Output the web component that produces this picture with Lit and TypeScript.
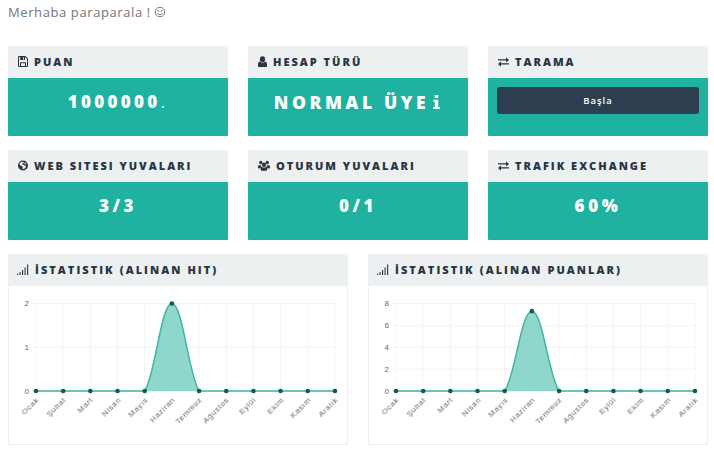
import { LitElement, html, css, svg } from "lit";
import { customElement, property } from "lit/decorators.js";

const MONTHS = ["Ocak","Şubat","Mart","Nisan","Mayıs","Haziran","Temmuz","Ağustos","Eylül","Ekim","Kasım","Aralık"];

const icons: Record<string, { w: number; body: unknown }> = {
  save: { w: 10, body: svg`<path fill-rule="evenodd" d="M0 1.2A1.2 1.2 0 0 1 1.2 0h6.3L10 2.5v7.3A1.2 1.2 0 0 1 8.8 11H1.2A1.2 1.2 0 0 1 0 9.8ZM1 1v9h1V6.2h6V10h1V3L7.2 1H7v3H2.2V1Zm2 6.2V10h4V7.2ZM5 1.4v2h1v-2Z"/>` },
  user: { w: 9, body: svg`<g transform="scale(.9 1)"><path d="M5 0.3a2.9 2.9 0 1 1 0 5.8a2.9 2.9 0 0 1 0-5.8ZM2 5.6c.8.7 1.8 1.1 3 1.1s2.200-.4 3-1.100c1.300.2 2 1.400 2 3.200v.9c0 .7-.5 1.300-1.200 1.300H1.200C.5 11 0 10.400 0 9.700v-.9c0-1.800.7-3 2-3.200Z"/></g>` },
  exchange: { w: 11, body: svg`<path d="M0 3h8V1l3 2.700-3 2.600V4.300H0ZM11 7H3V5.200L0 7.800l3 2.700V8.300h8Z" transform="translate(0 .2)"/>` },
  globe: { w: 10, body: svg`<path fill-rule="evenodd" d="M5 .5a5 5 0 1 1 0 10a5 5 0 0 1 0-10ZM3 2 1.400 3.400l.6 1.800 2 .7.800 1.600-.4 1.500h1.200L7.400 8l.6-2-2-.9-1.200-.4L4 3.800l1.400-.6.400-1.500Zm4 .2-.6 1.200 1 .9h1.200A4 4 0 0 0 7 2.200Z"/>` },
  users: { w: 12, body: svg`<g transform="scale(.92 1)"><path d="M3 .8a1.800 1.800 0 1 1 0 3.600a1.800 1.800 0 0 1 0-3.600ZM10 .8a1.800 1.800 0 1 1 0 3.600a1.800 1.800 0 0 1 0-3.600ZM6.500 2.500a2.200 2.200 0 1 1 0 4.400a2.200 2.200 0 0 1 0-4.400ZM0 7c0-1.200.5-2 1.300-2.100.5.400 1 .6 1.700.6h.4a3 3 0 0 0 .8 1.700C3 7.400 2.600 8 2.500 8.600H1C.4 8.600 0 8.200 0 7.600ZM13 7c0-1.200-.5-2-1.300-2.100-.5.400-1 .6-1.700.6h-.4a3 3 0 0 1-.8 1.700c1.200.2 1.600.8 1.700 1.400H12c.6 0 1-.4 1-1ZM4.500 7c.5.400 1.200.6 2 .6s1.500-.2 2-.6c1.100.2 1.500 1.200 1.500 2.400 0 .9-.5 1.400-1.200 1.400H4.200C3.500 10.800 3 10.300 3 9.400 3 8.200 3.400 7.200 4.500 7Z"/></g>` },
  signal: { w: 12, body: svg`<path d="M0 9.500h1.200V11H0ZM2.500 8h1.200v3H2.500ZM5 6h1.200v5H5ZM7.500 3.500h1.200V11H7.500ZM10 .5h1.200V11H10Z"/>` },
};

@customElement("stat-card")
class StatCard extends LitElement {
  @property() icon = "";
  @property() label = "";
  static styles = css`
    :host { display: flex; flex-direction: column; height: 90px; }
    .head { height: 32px; display: flex; align-items: center; gap: 6px; padding: 0 0 2px 10px; box-sizing: border-box;
      background: #ecf0f1; border-radius: 3px 3px 0 0; color: #2a3542; font-size: 11px; font-weight: 800; letter-spacing: 2px; }
    .head svg { fill: #2a3542; flex: none; }
    .body { flex: 1; background: #20b2a0; border-radius: 0 0 1px 1px; color: #fff; }
  `;
  render() {
    const i = icons[this.icon];
    return html`<div class="head"><svg width=${i.w} height="11" viewBox="0 0 ${i.w} 11">${i.body}</svg><span>${this.label}</span></div>
      <div class="body"><slot></slot></div>`;
  }
}

@customElement("chart-card")
class ChartCard extends LitElement {
  @property() label = "";
  @property({ type: Number }) max = 2;
  @property({ type: Number }) step = 1;
  @property({ type: Number }) peak = 2;
  static styles = css`
    :host { display: block; height: 191px; box-sizing: border-box; }
    .head { height: 32px; display: flex; align-items: center; gap: 6px; padding: 0 0 2px 9px; box-sizing: border-box;
      background: #ecf0f1; border-radius: 3px 3px 0 0; color: #2a3542; font-size: 11px; font-weight: 800; letter-spacing: 2.050px; }
    .head svg.ic { fill: #3a4653; flex: none; }
    .body { position: relative; height: 159px; box-sizing: border-box; border: 1px solid #eceef0; border-top: 0; border-radius: 0 0 3px 3px; background: #fff; }
    svg.chart { display: block; width: 100%; height: 100%; overflow: visible; }
    .tick { font: 8px "Liberation Sans", sans-serif; fill: #666; }
    .month { position: absolute; top: 113px; white-space: nowrap; font: 8px/8px "Liberation Sans", sans-serif; color: #6c6c6c; letter-spacing: 0.6px;
      transform-origin: 100% 50%; transform: translate(-100%, -50%) rotate(-45deg); will-change: transform; }
  `;
  render() {
    const i = icons.signal;
    const x0 = 27, dx = 27.18, y0 = 105, top = 17.5;
    const X = (n: number) => x0 + n * dx;
    const Y = (v: number) => y0 - (v / this.max) * (y0 - top);
    const ticks: number[] = [];
    for (let v = 0; v <= this.max; v += this.step) ticks.push(v);
    const px = Y(this.peak);
    const m = X(4), p = X(5), t = X(6);
    const c = 0.2 * 2 * dx;
    const cy = 0.2 * (y0 - px);
    const curve = `M${X(0)} ${y0}L${m} ${y0}C${m + c} ${y0 - cy} ${p - c} ${px} ${p} ${px}C${p + c} ${px} ${t - c} ${y0 - cy} ${t} ${y0}L${X(11)} ${y0}`;
    return html`<div class="head"><svg class="ic" width=${i.w} height="11" viewBox="0 0 12 11">${i.body}</svg><span>${this.label}</span></div>
      <div class="body"><svg class="chart" viewBox="0 0 338 158" preserveAspectRatio="none">
        ${ticks.map(v => svg`<line x1=${x0 - 3} x2=${X(11)} y1=${Y(v)} y2=${Y(v)} stroke=${v === 0 ? "#e4e4e4" : "#f3f3f3"} stroke-width="1"/>
          <text class="tick" x=${x0 - 7} y=${Y(v) + 2.800} text-anchor="end">${v}</text>`)}
        ${MONTHS.map((_, n) => svg`<line x1=${X(n)} x2=${X(n)} y1=${top} y2=${y0 + 3} stroke="#f3f3f3" stroke-width="1"/>`)}
        <path d=${curve + `L${X(11)} ${y0}L${X(0)} ${y0}Z`} fill="#8fd7cd" stroke="none"/>
        <path d=${curve} fill="none" stroke="#3fb5a3" stroke-width="1.500"/>
        ${MONTHS.map((_, n) => svg`<circle cx=${X(n)} cy=${n === 5 ? px : y0} r="2.300" fill="#0f5b52"/>`)}
      </svg>${MONTHS.map((mn, n) => html`<span class="month" style="left:${X(n) + 2}px">${mn}</span>`)}</div>`;
  }
}

@customElement("app-root")
class AppRoot extends LitElement {
  static styles = css`
    :host { display: block; width: 714px; height: 450px; overflow: hidden; background: #fff; font-family: "Open Sans", sans-serif; box-sizing: border-box; padding: 0 6px 0 8px; }
    .hello { height: 46px; margin: 0; padding-top: 3px; box-sizing: border-box; color: #73767c; font-size: 13px; letter-spacing: .6px; line-height: 18px; display: flex; align-items: flex-start; gap: 3px; font-weight: 400; }
    .hello svg { margin-top: 3px; }
    .grid { display: grid; grid-template-columns: repeat(3, 220px); column-gap: 20px; row-gap: 14px; }
    .charts { display: grid; grid-template-columns: repeat(2, 340px); column-gap: 20px; margin-top: 14px; }
    .value { text-align: center; font-weight: 800; letter-spacing: 3.600px; font-size: 17px; line-height: 24px; padding-top: 12px; }
    .score { letter-spacing: 3.300px; }
    .score span { font-weight: 400; }
    .wide { letter-spacing: 3.650px; font-size: 17.500px; display: flex; justify-content: center; align-items: center; gap: 4px; padding-right: 2px; }
    .wide svg { fill: #fff; flex: none; }
    .btn-wrap { padding: 9px; }
    button { display: block; width: 100%; height: 27px; border: 0; border-radius: 3px; background: #2c3e50; color: #fff; font: 600 9.500px "Open Sans", sans-serif; letter-spacing: 1px; padding: 0; }
  `;
  render() {
    return html`
      <p class="hello">Merhaba paraparala ! <svg width="12" height="12" viewBox="0 0 12 12" fill="none" stroke="#73767c" stroke-width="1"><circle cx="6" cy="6" r="4.800"/><circle cx="4.300" cy="4.800" r=".5" fill="#73767c"/><circle cx="7.700" cy="4.800" r=".5" fill="#73767c"/><path d="M3.500 7.200c.5 1 1.400 1.500 2.500 1.500s2-.5 2.500-1.500"/></svg></p>
      <div class="grid">
        <stat-card icon="save" label="PUAN"><div class="value score">1000000<span>.</span></div></stat-card>
        <stat-card icon="user" label="HESAP TÜRÜ"><div class="value wide"><span>NORMAL ÜYE</span><svg width="7" height="14" viewBox="0 0 7 14"><path d="M1.800 0h3.400v3H1.800ZM.3 4.800h4.900v7.200H7v2H0v-2h1.800V6.800H.3Z"/></svg></div></stat-card>
        <stat-card icon="exchange" label="TARAMA"><div class="btn-wrap"><button>Başla</button></div></stat-card>
        <stat-card icon="globe" label="WEB SITESI YUVALARI"><div class="value">3/3</div></stat-card>
        <stat-card icon="users" label="OTURUM YUVALARI"><div class="value">0/1</div></stat-card>
        <stat-card icon="exchange" label="TRAFIK EXCHANGE"><div class="value">60%</div></stat-card>
      </div>
      <div class="charts">
        <chart-card label="İSTATISTIK (ALINAN HIT)" max="2" step="1" peak="2"></chart-card>
        <chart-card label="İSTATISTIK (ALINAN PUANLAR)" max="8" step="2" peak="7.3"></chart-card>
      </div>`;
  }
}
